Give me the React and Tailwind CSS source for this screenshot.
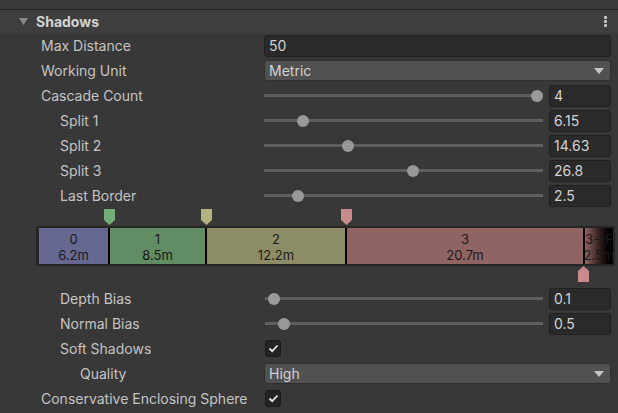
import React from 'react';

const font = { fontFamily: 'Inter, "Noto Sans", sans-serif' };

const Caret = () => (
  <svg width="10" height="6" viewBox="0 0 10 6" className="shrink-0">
    <polygon points="0,0 10,0 5,6" fill="#c4c4c4" />
  </svg>
);

const Row = ({ label, indent = 41, children }) => (
  <div className="flex items-center h-[25px]">
    <div className="w-[264px] shrink-0 whitespace-nowrap text-[14px] text-[#c4c4c4]" style={{ paddingLeft: indent }}>
      {label}
    </div>
    <div className="flex-1 flex items-center pr-[7px]">{children}</div>
  </div>
);

const TextField = ({ value, className = '' }) => (
  <div className={`h-[22px] flex items-center px-[4px] bg-[#2a2a2a] border border-[#212121] rounded-[3px] text-[14px] text-[#d2d2d2] ${className}`}>
    {value}
  </div>
);

const Dropdown = ({ value }) => (
  <div className="flex-1 h-[21px] flex items-center justify-between pl-[4px] pr-[6px] bg-[#515151] border border-[#303030] rounded-[3px] text-[14px] text-[#d2d2d2]">
    <span>{value}</span>
    <Caret />
  </div>
);

const Slider = ({ frac, value, start = 0 }) => (
  <div className="flex-1 flex items-center gap-[6px]">
    <div className="relative flex-1 h-[12px] flex items-center" style={{ marginLeft: start }}>
      <div className="w-full h-[3px] bg-[#5e5e5e]" />
      <div
        className="absolute top-0 w-[12px] h-[12px] rounded-full bg-[#999999]"
        style={{ left: `calc(${frac} * (100% - 12px))` }}
      />
    </div>
    <TextField value={value} className="w-[62px]" />
  </div>
);

const Check = () => (
  <div className="w-[16px] h-[17px] flex items-center justify-center bg-[#232323] border border-[#1a1a1a] rounded-[3px]">
    <svg width="11" height="9" viewBox="0 0 11 9">
      <polyline points="1.5,4.5 4.2,7.2 9.5,1.5" fill="none" stroke="#e4e4e4" strokeWidth="1.8" />
    </svg>
  </div>
);

const DownMarker = ({ x, color }) => (
  <svg width="11" height="16" viewBox="0 0 11 16" className="absolute top-0" style={{ left: x - 5.5 }}>
    <polygon points="0,0 11,0 11,11 5.5,16 0,11" fill={color} />
  </svg>
);

const segments = [
  { w: 69, bg: 'bg-[#676892]', a: '0', b: '6.2m' },
  { w: 95, bg: 'bg-[#628c64]', a: '1', b: '8.5m' },
  { w: 138, bg: 'bg-[#8c8c67]', a: '2', b: '12.2m' },
  { w: 236, bg: 'bg-[#916464]', a: '3', b: '20.7m' },
];

const CascadeBar = () => (
  <div className="pt-[1px] pb-[4px]">
    <div className="relative h-[17px]">
      <DownMarker x={109} color="#74ad78" />
      <DownMarker x={206} color="#b3b37f" />
      <DownMarker x={346} color="#c88a8a" />
    </div>
    <div className="ml-[36px] w-[579px] h-[40px] bg-[#262626] pl-[3px] pr-[2px] py-[2px] flex">
      {segments.map((s, i) => (
        <React.Fragment key={i}>
          <div
            className={`${s.bg} h-full shrink-0 flex flex-col items-center justify-center pt-[1px] text-[13px] leading-[16px] text-[#1a1a1a]`}
            style={{ width: s.w }}
          >
            <span>{s.a}</span>
            <span>{s.b}</span>
          </div>
          <div className="w-[2px] h-full bg-black shrink-0" />
        </React.Fragment>
      ))}
      <div className="flex-1 h-full overflow-hidden flex flex-col items-center justify-center pt-[1px] text-[13px] leading-[16px] text-[#1a1a1a] whitespace-nowrap bg-gradient-to-r from-[#916464] to-[#000000]">
        <span>3→F</span>
        <span>2.5m</span>
      </div>
    </div>
    <div className="relative h-[16px]">
      <svg width="11" height="16" viewBox="0 0 11 16" className="absolute top-0" style={{ left: 578 }}>
        <polygon points="5.5,0 11,5 11,16 0,16 0,5" fill="#c88a8a" />
      </svg>
    </div>
  </div>
);

export default function App() {
  return (
    <div className="w-[618px] h-[413px] overflow-hidden bg-[#383838]" style={font}>
      <div className="h-[9px] bg-[#3b3b3b] border-b border-[#242424] box-content" />
      <div className="h-[23px] bg-[#3e3e3e] flex items-center pl-[19px] pr-[11px]">
        <svg width="9" height="9" viewBox="0 0 9 9" className="shrink-0">
          <polygon points="0,1 9,1 4.5,8" fill="#8a8a8a" />
        </svg>
        <span className="ml-[8px] text-[14px] font-bold text-[#d2d2d2]">Shadows</span>
        <div className="ml-auto flex flex-col gap-[1px]">
          <span className="w-[3px] h-[3px] bg-[#c4c4c4] rounded-[1px]" />
          <span className="w-[3px] h-[3px] bg-[#c4c4c4] rounded-[1px]" />
          <span className="w-[3px] h-[3px] bg-[#c4c4c4] rounded-[1px]" />
        </div>
      </div>

      <Row label="Max Distance">
        <TextField value="50" className="flex-1" />
      </Row>
      <Row label="Working Unit">
        <Dropdown value="Metric" />
      </Row>
      <Row label="Cascade Count">
        <Slider frac={1} value="4" />
      </Row>
      <Row label="Split 1" indent={60}>
        <Slider frac={0.123} value="6.15" />
      </Row>
      <Row label="Split 2" indent={60}>
        <Slider frac={0.291} value="14.63" />
      </Row>
      <Row label="Split 3" indent={60}>
        <Slider frac={0.534} value="26.8" />
      </Row>
      <Row label="Last Border" indent={60}>
        <Slider frac={0.104} value="2.5" />
      </Row>

      <CascadeBar />

      <Row label="Depth Bias" indent={60}>
        <Slider frac={0.01} value="0.1" start={1} />
      </Row>
      <Row label="Normal Bias" indent={60}>
        <Slider frac={0.05} value="0.5" start={1} />
      </Row>
      <Row label="Soft Shadows" indent={60}>
        <div className="ml-[1px]">
          <Check />
        </div>
      </Row>
      <Row label="Quality" indent={80}>
        <Dropdown value="High" />
      </Row>
      <Row label="Conservative Enclosing Sphere">
        <div className="ml-[1px]">
          <Check />
        </div>
      </Row>
    </div>
  );
}
